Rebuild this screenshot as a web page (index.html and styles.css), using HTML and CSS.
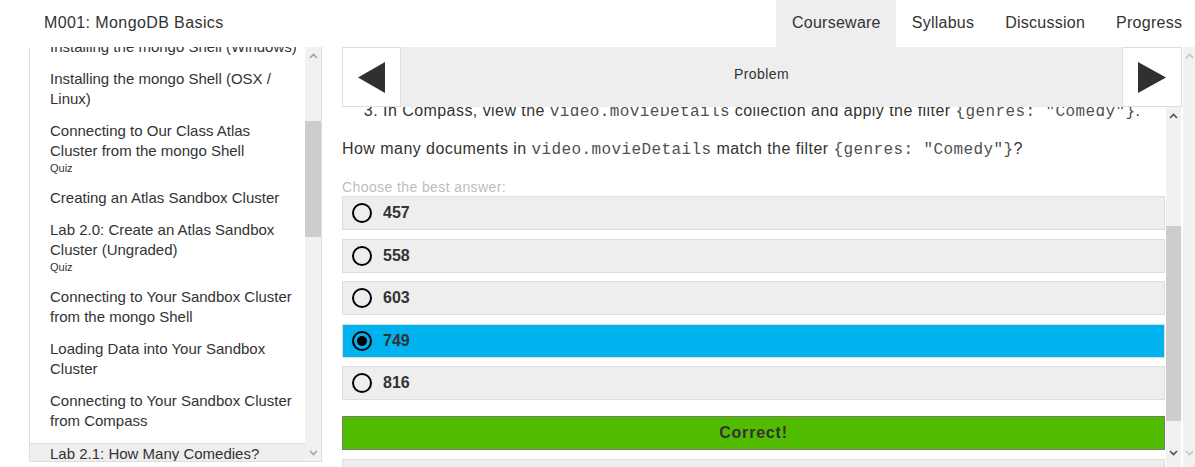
FILE: index.html
```html
<!DOCTYPE html>
<html lang="en">
<head>
<meta charset="utf-8">
<title>M001: MongoDB Basics</title>
<link rel="stylesheet" href="styles.css">
</head>
<body>
<header class="topbar">
  <div class="brand">M001: MongoDB Basics</div>
  <nav class="tabs">
    <a class="tab active">Courseware</a>
    <a class="tab">Syllabus</a>
    <a class="tab">Discussion</a>
    <a class="tab">Progress</a>
  </nav>
</header>
<div class="workspace">
  <aside class="sidebar">
    <div class="toc">
      <ul class="toc-list">
        <li class="toc-item">Installing the mongo Shell (Windows)</li>
        <li class="toc-item">Installing the mongo Shell (OSX /<br>Linux)</li>
        <li class="toc-item">Connecting to Our Class Atlas<br>Cluster from the mongo Shell<div class="tag">Quiz</div></li>
        <li class="toc-item">Creating an Atlas Sandbox Cluster</li>
        <li class="toc-item">Lab 2.0: Create an Atlas Sandbox<br>Cluster (Ungraded)<div class="tag">Quiz</div></li>
        <li class="toc-item">Connecting to Your Sandbox Cluster<br>from the mongo Shell</li>
        <li class="toc-item">Loading Data into Your Sandbox<br>Cluster</li>
        <li class="toc-item">Connecting to Your Sandbox Cluster<br>from Compass</li>
        <li class="toc-item active">Lab 2.1: How Many Comedies?</li>
      </ul>
    </div>
    <div class="sbar sbar-side">
      <div class="sbar-btn"><svg width="9" height="6" viewBox="0 0 9 6"><path d="M1 5 L4.5 1.5 L8 5" fill="none" stroke="currentColor" stroke-width="1.6"/></svg></div>
      <div class="sbar-track"><div class="sbar-thumb thumb-side"></div></div>
      <div class="sbar-btn"><svg width="9" height="6" viewBox="0 0 9 6"><path d="M1 1 L4.5 4.5 L8 1" fill="none" stroke="currentColor" stroke-width="1.6"/></svg></div>
    </div>
  </aside>
  <main class="unit">
    <div class="seqnav">
      <button class="seq-btn prev" aria-label="Previous"><svg width="27" height="31" viewBox="0 0 27 31"><polygon points="27,0 27,31 0,15.5" fill="#303030"/></svg></button>
      <div class="seq-title">Problem</div>
      <button class="seq-btn next" aria-label="Next"><svg width="28" height="31" viewBox="0 0 28 31"><polygon points="0,0 0,31 28,15.5" fill="#303030"/></svg></button>
    </div>
    <div class="unit-body">
      <div class="unit-scroll">
        <div class="problem">
          <ol class="steps" start="3">
            <li>In Compass, view the <code class="code">video.movieDetails</code> collection and apply the filter <code class="code">{genres: "Comedy"}</code>.</li>
          </ol>
          <p class="question">How many documents in <code class="code">video.movieDetails</code> match the filter <code class="code">{genres: "Comedy"}</code>?</p>
          <p class="prompt">Choose the best answer:</p>
          <div class="choices">
            <div class="choice"><span class="radio"></span><span class="choice-label">457</span></div>
            <div class="choice"><span class="radio"></span><span class="choice-label">558</span></div>
            <div class="choice"><span class="radio"></span><span class="choice-label">603</span></div>
            <div class="choice selected"><span class="radio checked"></span><span class="choice-label">749</span></div>
            <div class="choice"><span class="radio"></span><span class="choice-label">816</span></div>
          </div>
          <div class="result">Correct!</div>
          <div class="after-box"></div>
        </div>
      </div>
      <div class="sbar sbar-inner">
        <div class="sbar-btn"><svg width="9" height="6" viewBox="0 0 9 6"><path d="M1 5 L4.5 1.5 L8 5" fill="none" stroke="currentColor" stroke-width="1.6"/></svg></div>
        <div class="sbar-track"><div class="sbar-thumb thumb-inner"></div></div>
        <div class="sbar-btn sbar-btn-low"><svg width="9" height="6" viewBox="0 0 9 6"><path d="M1 1 L4.5 4.5 L8 1" fill="none" stroke="currentColor" stroke-width="1.6"/></svg></div>
      </div>
    </div>
  </main>
  <div class="sbar sbar-outer">
    <div class="sbar-btn"><svg width="9" height="6" viewBox="0 0 9 6"><path d="M1 5 L4.5 1.5 L8 5" fill="none" stroke="currentColor" stroke-width="1.6"/></svg></div>
    <div class="sbar-track"></div>
    <div class="sbar-btn sbar-btn-low"><svg width="9" height="6" viewBox="0 0 9 6"><path d="M1 1 L4.5 4.5 L8 1" fill="none" stroke="currentColor" stroke-width="1.6"/></svg></div>
  </div>
</div>
</body>
</html>
```

FILE: styles.css
```css
html, body {
  margin: 0;
  padding: 0;
}
body {
  width: 1195px;
  height: 467px;
  overflow: hidden;
  background: #fff;
  color: #333;
  font-family: "Liberation Sans", Arial, sans-serif;
}

/* header */
.topbar {
  display: flex;
  height: 47px;
}
.brand {
  width: 776px;
  box-sizing: border-box;
  padding-left: 44px;
  font-size: 16px;
  letter-spacing: 0.4px;
  line-height: 45px;
  color: #333;
}
.tabs {
  display: flex;
  flex: 1;
  white-space: nowrap;
  overflow: hidden;
}
.tab {
  display: block;
  padding: 0 15px 0 16px;
  font-size: 16px;
  letter-spacing: 0.25px;
  line-height: 45px;
  height: 47px;
  color: #333;
  text-decoration: none;
}
.tab.active {
  background: #eee;
}

/* workspace */
.workspace {
  display: flex;
  height: 420px;
}

/* sidebar */
.sidebar {
  margin-left: 29px;
  width: 293px;
  height: 415px;
  box-sizing: border-box;
  border: 1px solid #ddd;
  border-top: 0;
  display: flex;
}
.toc {
  flex: 1;
  overflow: hidden;
}
.toc-list {
  list-style: none;
  margin: -16px 0 0;
  padding: 0;
}
.toc-item {
  padding: 6px 0 6px 20px;
  font-size: 15px;
  line-height: 20px;
  white-space: nowrap;
  color: #333;
}
.tag {
  font-size: 11px;
  line-height: 15px;
}
.toc-item.active {
  margin-top: 6px;
  padding-top: 0;
  border-top: 1px solid #ddd;
  background: #eee;
}

/* scrollbars */
.sbar {
  display: flex;
  flex-direction: column;
  background: #f1f1f1;
}
.sbar-btn {
  height: 17px;
  flex: none;
  display: flex;
  align-items: center;
  justify-content: center;
}
.sbar-btn svg {
  display: block;
}
.sbar-btn-low {
  margin-bottom: 6px;
}
.sbar-track {
  flex: 1;
}
.sbar-thumb {
  background: #cdcdcd;
}
.sbar-side {
  width: 16px;
  color: #a3a3a3;
}
.thumb-side {
  margin-top: 57px;
  height: 116px;
}
.sbar-inner {
  width: 15px;
  margin-right: 1px;
  color: #505050;
}
.thumb-inner {
  margin-top: 102px;
  height: 195px;
}
.sbar-outer {
  margin-left: 1px;
  width: 12px;
  color: #c3c3c3;
}

/* main unit */
.unit {
  margin-left: 20px;
  width: 840px;
  display: flex;
  flex-direction: column;
}
.seqnav {
  display: flex;
  height: 60px;
  flex: none;
}
.seq-btn {
  margin: 0;
  padding: 0;
  box-sizing: border-box;
  border: 1px solid #ddd;
  background: #fff;
  display: flex;
  align-items: center;
  justify-content: center;
}
.seq-btn.prev {
  width: 59px;
}
.seq-btn.next {
  width: 60px;
}
.seq-btn svg {
  display: block;
}
.seq-title {
  flex: 1;
  background: #eee;
  display: flex;
  align-items: center;
  justify-content: center;
  padding-bottom: 6px;
  box-sizing: border-box;
  font-size: 14px;
  letter-spacing: 0.4px;
  color: #333;
}
.unit-body {
  display: flex;
  flex: 1;
  min-height: 0;
}
.unit-scroll {
  width: 824px;
  overflow: hidden;
}
.problem {
  margin-top: -6px;
}
.steps {
  margin: 0 0 18px;
  padding-left: 41px;
  font-size: 16px;
  letter-spacing: 0.45px;
  line-height: 20px;
}
.code {
  font-family: "Liberation Mono", "Courier New", monospace;
  font-size: 16px;
  letter-spacing: 0.4px;
  line-height: 1;
  color: #505050;
}
.question {
  margin: 0 0 20px;
  font-size: 16px;
  letter-spacing: 0.45px;
  line-height: 20px;
}
.prompt {
  margin: 0;
  font-size: 14px;
  letter-spacing: 0.4px;
  line-height: 17px;
  color: #bdbdbd;
}
.choice {
  width: 823px;
  height: 34px;
  box-sizing: border-box;
  border: 1px solid #ddd;
  background: #eee;
  display: flex;
  align-items: center;
  padding-left: 9px;
  margin-bottom: 8.5px;
}
.choice.selected {
  background: #00b2ee;
}
.radio {
  width: 20px;
  height: 20px;
  box-sizing: border-box;
  border: 2px solid #000;
  border-radius: 50%;
  display: flex;
  align-items: center;
  justify-content: center;
}
.radio.checked::after {
  content: "";
  width: 10px;
  height: 10px;
  border-radius: 50%;
  background: #000;
}
.choice-label {
  margin-left: 11px;
  font-size: 16px;
  font-weight: bold;
  color: #333;
}
.result {
  width: 823px;
  height: 34px;
  box-sizing: border-box;
  margin-top: 16px;
  margin-bottom: 9px;
  border: 1px solid #777;
  background: #52bc00;
  display: flex;
  align-items: center;
  justify-content: center;
  font-size: 16px;
  font-weight: bold;
  letter-spacing: 0.8px;
  color: #333;
}
.after-box {
  width: 823px;
  height: 40px;
  box-sizing: border-box;
  border: 1px solid #ddd;
  background: #eee;
}
```
